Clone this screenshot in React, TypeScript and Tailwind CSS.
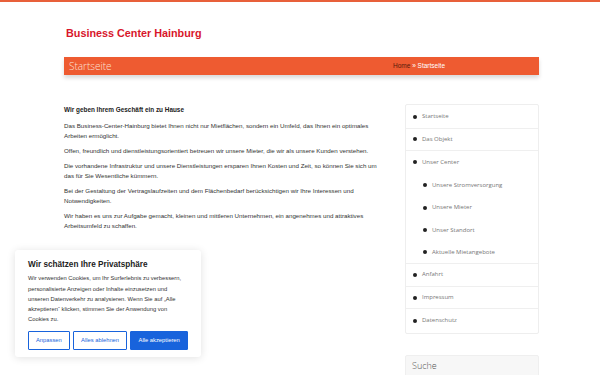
import React from 'react';

const sidebarItems: { label: string; sub?: boolean; divider?: boolean }[] = [
  { label: 'Startseite', divider: true },
  { label: 'Das Objekt', divider: true },
  { label: 'Unser Center' },
  { label: 'Unsere Stromversorgung', sub: true },
  { label: 'Unsere Mieter', sub: true },
  { label: 'Unser Standort', sub: true },
  { label: 'Aktuelle Mietangebote', sub: true, divider: true },
  { label: 'Anfahrt', divider: true },
  { label: 'Impressum', divider: true },
  { label: 'Datenschutz' },
];

const paragraphs = [
  'Das Business-Center-Hainburg bietet Ihnen nicht nur Mietflächen, sondern ein Umfeld, das Ihnen ein optimales Arbeiten ermöglicht.',
  'Offen, freundlich und dienstleistungsorientiert betreuen wir unsere Mieter, die wir als unsere Kunden verstehen.',
  'Die vorhandene Infrastruktur und unsere Dienstleistungen ersparen Ihnen Kosten und Zeit, so können Sie sich um das für Sie Wesentliche kümmern.',
  'Bei der Gestaltung der Vertragslaufzeiten und dem Flächenbedarf berücksichtigen wir Ihre Interessen und Notwendigkeiten.',
  'Wir haben es uns zur Aufgabe gemacht, kleinen und mittleren Unternehmen, ein angenehmes und attraktives Arbeitsumfeld zu schaffen.',
];

export default function App() {
  return (
    <div className="relative h-[375px] w-[600px] overflow-hidden bg-white">
      {/* Top stripe */}
      <div className="h-[2px] bg-[#e8603a]" />

      <div className="ml-[64px] w-[475px]">
        {/* Logo */}
        <div className="pl-[2px] pt-[23px] h-[55px] font-['Liberation_Sans',sans-serif] text-[10.8px] font-bold text-[#d8162b]">
          Business Center Hainburg
        </div>

        {/* Title bar */}
        <div className="flex h-[18px] items-center bg-[#ee5b31] shadow-[0_3px_4px_rgba(0,0,0,0.15)]">
          <span className="pl-[5px] w-[329px] font-['Open_Sans',sans-serif] text-[10px] font-light text-[#fde1d6]">
            Startseite
          </span>
          <span className="font-['Liberation_Sans',sans-serif] text-[6.5px] text-white">
            <span className="text-[#5a1a0a]">Home</span> » Startseite
          </span>
        </div>

        {/* Main area */}
        <div className="mt-[29px] flex">
          <div className="w-[322px] font-['Liberation_Sans',sans-serif] text-[6.2px] leading-[10px] text-[#333]">
            <p className="mt-[1px] mb-[6px] font-bold text-[6.4px] text-[#222]">Wir geben Ihrem Geschäft ein zu Hause</p>
            {paragraphs.map((p) => (
              <p key={p} className="mb-[5px] pr-[4px]">
                {p}
              </p>
            ))}
          </div>

          <div className="ml-[19px] w-[134px]">
            <div className="rounded-[2px] border border-[#eeeeee] bg-white py-[1px] font-['Open_Sans',sans-serif] text-[6px] text-[#777]">
              {sidebarItems.map((it) => (
                <div
                  key={it.label}
                  className={`flex h-[22.6px] items-center ${it.sub ? 'pl-[17px]' : 'pl-[7px]'} ${
                    it.divider ? 'border-b border-[#efefef]' : ''
                  }`}
                >
                  <span className="mr-[5px] inline-block h-[4px] w-[4px] rounded-full bg-[#222]" />
                  {it.label}
                </div>
              ))}
            </div>

            <div className="mt-[21px] h-[40px] rounded-[2px] border border-[#efefef] bg-[#f7f7f7] pl-[6px] pt-[3px] font-['Open_Sans',sans-serif] text-[9px] font-light text-[#555]">
              Suche
            </div>
          </div>
        </div>
      </div>

      {/* Cookie banner */}
      <div className="absolute left-[15px] top-[250px] w-[186px] rounded-[3px] bg-white px-[13px] pt-[9px] pb-[7px] shadow-[0_1px_8px_rgba(0,0,0,0.12)] font-['Liberation_Sans',sans-serif]">
        <div className="text-[8.2px] font-bold text-[#222]">Wir schätzen Ihre Privatsphäre</div>
        <p className="mt-[2px] text-[5.8px] leading-[10.2px] text-[#333]">
          Wir verwenden Cookies, um Ihr Surferlebnis zu verbessern, personalisierte Anzeigen oder Inhalte einzusetzen und unseren Datenverkehr zu analysieren. Wenn Sie auf „Alle akzeptieren“ klicken, stimmen Sie der Anwendung von Cookies zu.
        </p>
        <div className="mt-[7px] flex gap-[3px]">
          <button className="h-[19px] w-[42px] rounded-[1px] border border-[#1863dc] text-[5.8px] text-[#1863dc]">
            Anpassen
          </button>
          <button className="h-[19px] w-[55px] rounded-[1px] border border-[#1863dc] text-[5.8px] text-[#1863dc]">
            Alles ablehnen
          </button>
          <button className="h-[19px] w-[58px] rounded-[1px] border border-[#1863dc] bg-[#1863dc] text-[5.8px] text-white">
            Alle akzeptieren
          </button>
        </div>
      </div>
    </div>
  );
}
